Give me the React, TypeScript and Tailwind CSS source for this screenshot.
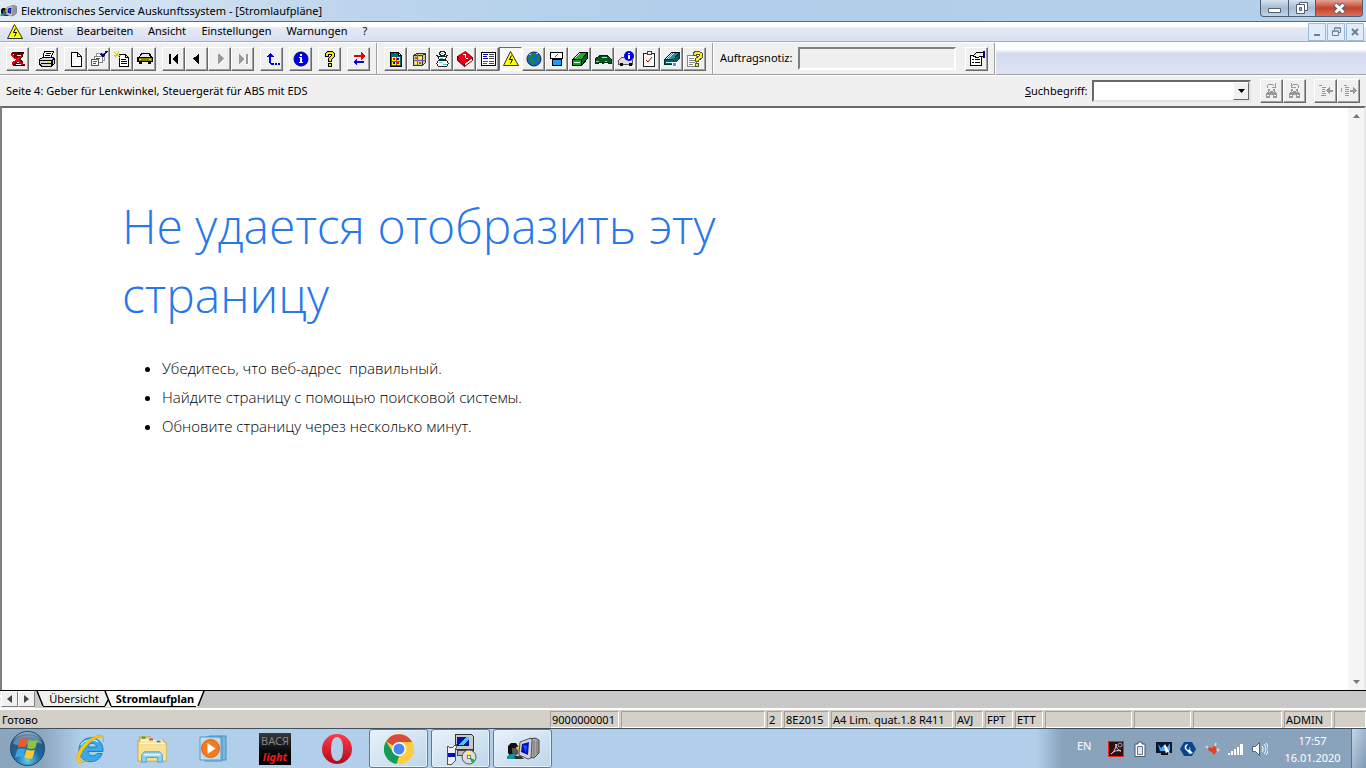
import { ReactNode } from "react";
import { clsx } from "clsx";

interface ToolButtonProps {
  label: string;
  pressed?: boolean;
  disabled?: boolean;
  children: ReactNode;
}

function Pic({ children }: { children: ReactNode }) {
  return (
    <svg viewBox="0 0 18 18" className="h-[18px] w-[18px] shrink-0" fill="none" shapeRendering="crispEdges" aria-hidden="true">
      {children}
    </svg>
  );
}

function ToolButton({ label, pressed, disabled, children }: ToolButtonProps) {
  return (
    <button
      type="button"
      title={label}
      aria-label={label}
      disabled={disabled}
      className={clsx(
        "flex h-6 w-[23px] shrink-0 items-center justify-center border",
        pressed
          ? "border-t-[#696969] border-l-[#696969] border-r-white border-b-white bg-[#f8f8f8]"
          : "border-t-white border-l-white border-r-[#696969] border-b-[#696969] bg-[#f0f0f0] shadow-[inset_-1px_-1px_0_#a0a0a0]"
      )}
    >
      {children}
    </button>
  );
}

function Divider() {
  return <div className="mx-[6px] h-full w-[2px] shrink-0 border-l border-[#a0a0a0] bg-white" />;
}

const page = "M4.5 2.5h6l4 4v10h-10z";

function MainTools() {
  return (
    <div className="flex items-center gap-[6px] pl-[6px]">
      <ToolButton label="Beenden">
        <Pic>
          <path d="M3 2h12v2h-1v2l-3 3 3 3v2h2v2H4v-2h1v-2l3-3-3-3V4H3z" fill="#600" />
          <path d="M8 5h4M8 12h3M7 14h6" stroke="#fff" />
          <path d="M2 4l12 11M3 14l11-9" stroke="#e00010" strokeWidth="2" />
          <path d="M8 2.500h7M6 15.500h9M13.500 4v3M5.500 5v3" stroke="#200" />
        </Pic>
      </ToolButton>
      <ToolButton label="Drucken">
        <Pic>
          <path d="M6.500 1.500h9l-3 7h-8z" fill="#fff" stroke="#000" />
          <path d="M8 3.500h5M7 5.500h5" stroke="#000" />
          <path d="M1.500 9.500l3-2h11l1 2v4l-3 2.500h-10l-2-2z" fill="#d8d8d8" stroke="#000" />
          <path d="M2 10.500h11.500v5M13.500 10.500l3-2M3 13.500h10M14.500 9v6" stroke="#000" />
          <path d="M9 12.500h2" stroke="#dd0" />
        </Pic>
      </ToolButton>
      <div className="flex">
        <ToolButton label="Neu">
          <Pic><path d={page} fill="#fff" stroke="#000" /><path d="M10.500 2.500v4h4" stroke="#000" /></Pic>
        </ToolButton>
        <ToolButton label="Auswahl">
          <Pic>
            <path d="M6.500 3.500h8v7h-8z" fill="#fff" stroke="#999" />
            <path d="M4.500 6.500h8v6h-8z" fill="#fff" stroke="#888" />
            <path d="M1.500 9.500h7v6h-7zM3 11.500h4M3 13.500h3M6 8.500h4" fill="#fff" stroke="#555" />
            <path d="M11 4l2 2 4-5" stroke="#000080" strokeWidth="2" />
          </Pic>
        </ToolButton>
        <ToolButton label="Neuer Auftrag">
          <Pic>
            <path d="M6.500 4.500h6l3 3v9h-9z" fill="#fff" stroke="#000" />
            <path d="M12.500 4.500v3h3M8 9.500h5M8 11.500h6M8 13.500h6" stroke="#000" />
            <path d="M1 2l6 6M6 1L2 8M1 5h7" stroke="#dbd000" />
          </Pic>
        </ToolButton>
        <ToolButton label="Fahrzeug">
          <Pic>
            <path d="M5 3h9l2 4h1v5h-2v2h-3v-2H6v2H3v-2H1V7h2z" fill="#000" />
            <path d="M6 4h7l1 3H4z" fill="#e8e8e8" />
            <path d="M3 8h13v3H3z" fill="#888000" />
            <path d="M3 9.500h2M13 9.500h2" stroke="#ff0" />
          </Pic>
        </ToolButton>
      </div>
      <div className="flex">
        <ToolButton label="Erste Seite"><Pic><path d="M4 4h2v10H4zM13 4v10h-1V13h-1V12h-1V11H9V10H8V8h1V7h1V6h1V5h1V4z" fill="#000" /></Pic></ToolButton>
        <ToolButton label="Vorherige Seite"><Pic><path d="M11 4v10h-1v-1H9v-1H8v-1H7v-1H6v-1H5V8h1V7h2V6h1V5h1V4z" fill="#000" /></Pic></ToolButton>
        <ToolButton label="Nächste Seite" disabled><Pic><path d="M8 15v-1h1v-1h1v-1h1v-1h1v-1h1V9h1v1h-1v1h-1v1h-1v1h-1v1H9v1z" fill="#fff" /><path d="M7 4v10h1v-1h1v-1h1v-1h1v-1h1v-1h1V8h-1V7h-1V6h-1V5H9V4z" fill="#999" /></Pic></ToolButton>
        <ToolButton label="Letzte Seite" disabled><Pic><path d="M5 4v10h1v-1h1v-1h1v-1h1v-1h1V8H9V7H8V6H7V5H6V4zM12 4h2v10h-2z" fill="#999" /><path d="M14.500 5v9.500M12 14.500h2" stroke="#fff" /></Pic></ToolButton>
      </div>
      <ToolButton label="Zurück">
        <Pic><path d="M3 7l4-4 4 4H8v6h3v2H8l-2-2V7zM12 13h2v2h-2zM15 13h2v2h-2z" fill="#0000e8" /></Pic>
      </ToolButton>
      <ToolButton label="Info">
        <Pic>
          <circle cx="9" cy="9" r="7" fill="#0000f0" stroke="#000080" shapeRendering="auto" />
          <path d="M8 4h2v2H8zM7 7h3v5h1v1H7v-1h1V8H7z" fill="#fff" />
        </Pic>
      </ToolButton>
      <ToolButton label="Hilfe">
        <Pic>
          <path d="M4.500 6.500v-3l2-2h5l2 2v3l-3 3v2h-3v-3l3-3v-1h-3v2z" fill="#f5e600" stroke="#000" />
          <path d="M7.500 13.500h3v3h-3z" fill="#f5e600" stroke="#000" />
        </Pic>
      </ToolButton>
      <ToolButton label="Wechseln">
        <Pic>
          <path d="M4 5h7V2l4 4-4 4V7H4z" fill="#e80000" />
          <path d="M14 11H7V9l-4 3 4 4v-3h7z" fill="#0000e8" />
        </Pic>
      </ToolButton>
    </div>
  );
}

function Warning() {
  return (
    <>
      <path d="M8.500 1.500l8 14h-15z" fill="#ff0" stroke="#333" shapeRendering="auto" />
      <path d="M9.500 5.500l-2 4h3l-2 4" stroke="#000" shapeRendering="auto" />
    </>
  );
}

function ServiceTools() {
  return (
    <div className="flex">
      <ToolButton label="Fahrzeugdaten">
        <Pic>
          <path d="M3.500 2.500h8l3 3v11h-11z" fill="#006d6d" stroke="#000" />
          <path d="M11.500 2.500v3h3z" fill="#fff" stroke="#000" />
          <path d="M5 7h8v8H5z" fill="#ff0" />
          <path d="M6 8h2v2H6zM10 12h2v2h-2z" fill="#e00" />
          <path d="M10 8h2v2h-2zM6 12h2v2H6z" fill="#00c" />
          <path d="M9 7v8M5 11h8" stroke="#c33" />
        </Pic>
      </ToolButton>
      <ToolButton label="Teile">
        <Pic>
          <path d="M3.500 5.500l3-2h9v9l-3 3h-9z" fill="#d0cc80" stroke="#334" />
          <path d="M4 5.500h8.500v10M12.500 5.500l3-2" stroke="#334" />
          <path d="M7.500 4v11M4 10.500h11" stroke="#6468c0" />
          <path d="M5 7h2v2H5zM9 12h2v2H9z" fill="#e33" />
          <path d="M9 7h3v2H9zM5 12h2v2H5z" fill="#ff0" />
        </Pic>
      </ToolButton>
      <ToolButton label="Wartung">
        <Pic>
          <path d="M7.500 1.500h4l1 2-1 2h-4l-1-2z" fill="#fff" stroke="#222" />
          <path d="M4.500 6.500h9l-1 3h-6z" fill="#fff" stroke="#222" />
          <path d="M5.500 10.500h8l2 3-2 3h-8l-2-3z" fill="#fff" stroke="#222" />
          <path d="M8 3.500h2M7 8.500h3M6 12.500h3M10 14.500h4" stroke="#4cc" />
          <path d="M3 5.500h2M13 5.500h2M8 10.500h3" stroke="#222" />
        </Pic>
      </ToolButton>
      <ToolButton label="Reparaturleitfaden">
        <Pic>
          <path d="M1.500 6.500l8-5 7 6-8 6z" fill="#f00018" stroke="#900" shapeRendering="auto" />
          <path d="M8.500 13.500l8-6v3l-8 6z" fill="#fff" stroke="#600" shapeRendering="auto" />
          <path d="M1.500 6.500l7 7v3l-7-6z" fill="#d00010" stroke="#600" shapeRendering="auto" />
          <path d="M7 4.500h2v3M10 8.500h2" stroke="#fff" />
        </Pic>
      </ToolButton>
      <ToolButton label="Fehlersuche">
        <Pic>
          <path d="M2.500 2.500h14v13h-14z" fill="#fff" stroke="#000" />
          <path d="M4 4.500h5M4 6.500h4M4 8.500h5" stroke="#00c" />
          <path d="M4 11.500h5M4 13.500h4" stroke="#090" />
          <path d="M10 4.500h5M10 6.500h5M10 8.500h5M10 11.500h5M10 13.500h5" stroke="#444" />
        </Pic>
      </ToolButton>
      <ToolButton label="Stromlaufpläne" pressed><Pic><Warning /></Pic></ToolButton>
      <ToolButton label="Internet">
        <Pic>
          <circle cx="9" cy="9" r="7" fill="#1664c8" stroke="#102060" shapeRendering="auto" />
          <path d="M5 3h5v2H8v2H6v2h3l1 3-2 3-2-1-1-4-2-1 1-4zM12 5h2l1 4-1 3-2-2z" fill="#128a3b" />
          <path d="M4 4h2v1H4zM11 3h2v1h-2z" fill="#9cf" />
        </Pic>
      </ToolButton>
      <ToolButton label="Karosserie">
        <Pic>
          <path d="M2.500 2.500h12v6h-12z" fill="#fff" stroke="#000" />
          <path d="M7 7l3-3" stroke="#555" />
          <path d="M4.500 9.500h9v6h-9z" fill="#29f" stroke="#000" />
        </Pic>
      </ToolButton>
      <ToolButton label="Handbuch">
        <Pic>
          <path d="M1.500 9.500l7-7h8l-6 7z" fill="#18b028" stroke="#000" />
          <path d="M1.500 9.500h9v6h-9z" fill="#10a020" stroke="#000" />
          <path d="M10.500 9.500l6-7v6l-6 7z" fill="#006b18" stroke="#000" />
          <path d="M4 8l5-5M3 12.500h6" stroke="#fff" />
        </Pic>
      </ToolButton>
      <ToolButton label="Fahrzeugsuche">
        <Pic>
          <path d="M1 9l3-2 3-2h5l3 2 2 2v4h-3v-1h-3l-1 1H8v-1H4v1H1z" fill="#005c1c" stroke="#002c08" />
          <path d="M7 8l1-1h4l1 1z" fill="#c0dfc0" />
          <path d="M2 11h3M11 11h2" stroke="#bbb" />
        </Pic>
      </ToolButton>
      <ToolButton label="Fahrzeuginfo">
        <Pic>
          <path d="M1.500 10.500l3-3h9l2 3v4h-14z" fill="#ddd" stroke="#555" />
          <path d="M3 13.500h2v2H3zM12 13.500h2v2h-2z" fill="#000" stroke="#000" />
          <circle cx="12" cy="6" r="5" fill="#0000f0" shapeRendering="auto" />
          <path d="M11 3h2v1h-2zM11 5h2v4h-2z" fill="#fff" />
        </Pic>
      </ToolButton>
      <ToolButton label="Checkliste">
        <Pic>
          <path d="M3.500 3.500h11v13h-11z" fill="#fff" stroke="#222" />
          <path d="M7 1.500h4v3H7z" fill="#eee" stroke="#444" />
          <path d="M6 10l2 2 4-5" stroke="#c00000" shapeRendering="auto" />
        </Pic>
      </ToolButton>
      <ToolButton label="Arbeitspositionen">
        <Pic>
          <path d="M1.500 9.500l7-7h8l-6 7z" fill="#1b9090" stroke="#000" />
          <path d="M1.500 9.500h9v5h-9zM10.500 9.500l6-7v6l-6 6z" fill="#006070" stroke="#033" />
          <path d="M3 9l6-6M5 9l6-6M3 12h7" stroke="#cff" />
          <path d="M9 12h4v4H9z" fill="#39f" stroke="#fff" />
        </Pic>
      </ToolButton>
      <ToolButton label="Hinweise">
        <Pic>
          <path d="M1.500 5.500h9v11h-9zM3 8.500h5M3 10.500h6M3 12.500h6M3 14.500h4" fill="#fff" stroke="#888" />
          <path d="M7.500 5.500v-3l2-1h4l3 2v4l-4 3v1h-3v-3l4-3v-1h-3v1z" fill="#ffee00" stroke="#554" />
          <path d="M9.500 13.500h3v3h-3z" fill="#ffee00" stroke="#554" />
        </Pic>
      </ToolButton>
    </div>
  );
}

function AppLogo({ className }: { className: string }) {
  return (
    <svg viewBox="0 0 34 24" className={className} aria-hidden="true">
      <path d="M2 9l3-3h5l2 3v7l-3 4H5l-3-4z" fill="#111" />
      <path d="M6 11h4l2 2v4l-3 2-3-3z" fill="#555" />
      <path d="M1 19l4-2h4l3 5H1z" fill="#0a9aa4" />
      <path d="M8 19h7l3 3H9z" fill="#333" />
      <path d="M12 9h5v10h-4z" fill="#f4f4f4" stroke="#555" strokeWidth=".5" />
      <path d="M10 10l5-1v2l-4 2zM13 6h4v4h-3z" fill="#eec900" />
      <path d="M23 2l6-1 4 2v13l-5 5-5-1z" fill="#a8a8a8" stroke="#222" strokeWidth=".8" />
      <path d="M14 5l11-4 1 2-1 18-3 1-9-4z" fill="#d4d4d4" stroke="#333" strokeWidth=".8" />
      <path d="M16 7l7-2-1 13-7-3z" fill="#0010b8" />
      <path d="M17 8l4 1-1 7z" fill="#2458ff" />
      <path d="M28 4v15M31 4v13" stroke="#666" strokeWidth=".8" />
    </svg>
  );
}

function TitleBar() {
  const button = "flex h-[17px] items-center justify-center border border-t-0 border-[#4d5f74]";
  return (
    <header className="flex h-[22px] items-start justify-between border-b border-[#5d6b7a] bg-linear-to-r from-[#c9dcef] via-[#b1cfea] to-[#b5d0ea]">
      <div className="flex h-[21px] items-center bg-linear-to-r from-[#dfeaf5] via-[#cfe0f1] to-transparent pr-6">
        <AppLogo className="mr-1 h-3 w-[17px]" />
        <h1 className="text-[11px] leading-4 text-black">Elektronisches Service Auskunftssystem - [Stromlaufpläne]</h1>
      </div>
      <div className="mr-[3px] flex">
        <button type="button" aria-label="Minimieren" className={clsx(button, "w-[29px] rounded-bl-[4px] bg-linear-to-b from-[#d6e2ef] via-[#a5bbd2] to-[#c1d5e9]")}>
          <svg viewBox="0 0 13 5" className="mt-1 h-[5px] w-[13px]" aria-hidden="true"><path d="M.5.5h12v4H.5z" fill="#fff" stroke="#555f70" /></svg>
        </button>
        <button type="button" aria-label="Verkleinern" className={clsx(button, "w-[27px] border-l-0 bg-linear-to-b from-[#d6e2ef] via-[#a5bbd2] to-[#c1d5e9]")}>
          <svg viewBox="0 0 12 12" className="h-3 w-3" aria-hidden="true">
            <path d="M3.500.5h8v8h-8z" fill="#fff" stroke="#555f70" />
            <path d="M.5 2.500h8v9h-8z" fill="#fff" stroke="#555f70" />
            <path d="M3.500 5.500h2v3h-2z" fill="#9fb4c9" stroke="#555f70" />
          </svg>
        </button>
        <button type="button" aria-label="Schließen" className={clsx(button, "w-[47px] rounded-br-[4px] border-l-0 bg-linear-to-b from-[#e2a295] via-[#c4412c] to-[#d9705a]")}>
          <svg viewBox="0 0 13 11" className="h-[11px] w-[13px]" aria-hidden="true">
            <path d="M2 1l9 9M11 1l-9 9" stroke="#555f70" strokeWidth="5" />
            <path d="M2.500 1.500l8 8M10.500 1.500l-8 8" stroke="#fff" strokeWidth="3" />
          </svg>
        </button>
      </div>
    </header>
  );
}

function MenuBar() {
  const childButton = "flex h-[18px] w-[18px] items-center justify-center border border-[#9db9d6] bg-[#dfecfa]";
  return (
    <nav className="flex h-5 items-center justify-between border-b border-[#a9a9b8] bg-linear-to-b from-white from-25% via-[#e3eaf4] via-30% to-[#dbe0f2] text-[11px]">
      <div className="flex items-center">
        <span className="ml-[6px] flex w-[17px]"><Pic><Warning /></Pic></span>
        <button type="button" className="w-[47px]">Dienst</button>
        <button type="button" className="w-[70px]">Bearbeiten</button>
        <button type="button" className="w-[54px]">Ansicht</button>
        <button type="button" className="w-[85px]">Einstellungen</button>
        <button type="button" className="w-[76px]">Warnungen</button>
        <button type="button" className="w-[20px]">?</button>
      </div>
      <div className="mr-[2px] flex gap-px">
        <button type="button" aria-label="Fenster minimieren" className={childButton}>
          <svg viewBox="0 0 8 8" className="h-2 w-2" aria-hidden="true"><path d="M1 6h6v2H1z" fill="#6d7f92" /></svg>
        </button>
        <button type="button" aria-label="Fenster verkleinern" className={childButton}>
          <svg viewBox="0 0 9 9" className="h-[9px] w-[9px]" aria-hidden="true"><path d="M2.500 3V1h6v4.500H7M.5 4h6v4.500h-6zM0 4h7M2 1h7" fill="none" stroke="#6d7f92" /></svg>
        </button>
        <button type="button" aria-label="Fenster schließen" className={childButton}>
          <svg viewBox="0 0 8 8" className="h-2 w-2" aria-hidden="true"><path d="M1 1l6 6M7 1L1 7" stroke="#6d7f92" strokeWidth="2" /></svg>
        </button>
      </div>
    </nav>
  );
}

function Toolbar() {
  return (
    <div className="flex h-[33px] items-center border-t border-b border-t-white border-b-[#a0a0a0] bg-linear-to-b from-white from-20% via-[#d3d9ee] via-35% to-[#e0e5f6]">
      <div className="flex h-full items-center bg-[#f0f0f0]">
        <MainTools />
        <Divider />
        <ServiceTools />
        <Divider />
        <label htmlFor="note" className="w-[78px] text-[11px]">Auftragsnotiz:</label>
        <input
          id="note"
          readOnly
          className="mr-[9px] h-[23px] w-[158px] border-2 border-t-[#808080] border-l-[#808080] border-r-white border-b-white bg-[#f0f0f0] px-1 text-[11px] outline-none"
        />
        <ToolButton label="Eigenschaften">
          <Pic>
            <path d="M2.500 5.500h11v10h-11z" fill="#fff" stroke="#000" />
            <path d="M4 9.500h2M4 12.500h2M7 9.500h5M7 12.500h5" stroke="#000" />
            <path d="M5 6l4-4h6v4h-3l-2 2z" fill="#eee" stroke="#000" />
            <path d="M15 1h2v7h-2z" fill="#000090" />
          </Pic>
        </ToolButton>
        <div className="ml-[6px] h-8 w-[2px] border-l border-[#a0a0a0] bg-white" />
      </div>
    </div>
  );
}

function Binoculars({ flip }: { flip?: boolean }) {
  return (
    <Pic>
      <path d="M5 7h2v2h3V7h2v2l2 3v4h-4v-3H7v3H3v-4l2-3z" fill="#999" />
      <path d="M4 13.500h2M11 13.500h2M6 9.500h1M10 9.500h1" stroke="#fff" />
      <path d={flip ? "M12.500 6V3.500l-1-1h-4l-2 2M5.500 1v4h4" : "M4.500 6V3.500l1-1h4l2 2M12.500 1v4h-4"} stroke="#999" />
    </Pic>
  );
}

function SearchRow() {
  return (
    <div className="flex h-[31px] items-center justify-between border-t border-t-white bg-[#f0f0f0] pr-[6px] pl-[6px] text-[11px]">
      <p>Seite 4: Geber für Lenkwinkel, Steuergerät für ABS mit EDS</p>
      <div className="flex items-center">
        <label htmlFor="search" className="w-[67px]"><u>S</u>uchbegriff:</label>
        <div className="mr-[9px] flex h-[22px] w-[159px] border-2 border-t-[#696969] border-l-[#696969] border-r-[#e3e3e3] border-b-[#e3e3e3] bg-white">
          <input id="search" className="min-w-0 flex-1 bg-white px-1 outline-none" />
          <button type="button" aria-label="Suchbegriffe öffnen" className="flex w-4 items-center justify-center border border-t-white border-l-white border-r-[#696969] border-b-[#696969] bg-[#f0f0f0]">
            <svg viewBox="0 0 7 4" className="h-1 w-[7px]" aria-hidden="true"><path d="M0 0h7L3.500 4z" /></svg>
          </button>
        </div>
        <ToolButton label="Weitersuchen" disabled><Binoculars /></ToolButton>
        <ToolButton label="Rückwärts suchen" disabled><Binoculars flip /></ToolButton>
        <div className="w-2" />
        <ToolButton label="Vorherige Fundstelle" disabled>
          <Pic>
            <path d="M2 3.500h3M5 5.500h4M5 7.500h3M5 9.500h3M5 11.500h4M4 13.500h5" stroke="#999" />
            <path d="M9 8.500l4-4v3h3v2h-3v3z" fill="#999" />
          </Pic>
        </ToolButton>
        <ToolButton label="Nächste Fundstelle" disabled>
          <Pic>
            <path d="M1.500 6v4M4 3.500h3M5 5.500h4M5 7.500h4M5 9.500h4M5 11.500h4M5 13.500h4" stroke="#999" />
            <path d="M17 8.500l-4-4v3h-3v2h3v3z" fill="#999" />
          </Pic>
        </ToolButton>
      </div>
    </div>
  );
}

function ErrorPage() {
  return (
    <main className="flex min-h-0 flex-1 border-t-2 border-r-2 border-l-2 border-t-[#696969] border-r-[#e8e8e8] border-l-[#808080] bg-white">
      <article className="flex-1 pt-[83px] pl-[120px] font-['Open_Sans','Noto_Sans',sans-serif] font-light">
        <h2 className="max-w-[640px] text-[48px] leading-[69px] text-[#2778ec]">Не удается отобразить эту страницу</h2>
        <ul className="mt-[25px] list-disc pl-[40px] text-[15px] leading-[29px] text-black">
          <li>Убедитесь, что веб-адрес&nbsp; правильный.</li>
          <li>Найдите страницу с помощью поисковой системы.</li>
          <li>Обновите страницу через несколько минут.</li>
        </ul>
      </article>
      <div className="flex w-4 flex-col items-center justify-between bg-[#f5f5f5] py-[6px]">
        <svg viewBox="0 0 7 4" className="h-1 w-[7px]" aria-hidden="true"><path d="M0 4h7L3.500 0z" fill="#777" /></svg>
        <svg viewBox="0 0 7 4" className="h-1 w-[7px]" aria-hidden="true"><path d="M0 0h7L3.500 4z" fill="#777" /></svg>
      </div>
    </main>
  );
}

function SheetTabs() {
  const arrow = "flex h-4 w-[17px] items-center justify-center border border-t-white border-l-white border-r-[#808080] border-b-[#808080] bg-[#f0f0f0]";
  return (
    <div className="flex h-[18px] border-t border-black bg-[#c8c8c8] text-[11px] leading-4">
      <div className="flex bg-[#f0f0f0] pl-px">
        <button type="button" aria-label="Zurückblättern" className={arrow}>
          <svg viewBox="0 0 5 8" className="h-2 w-[5px]" aria-hidden="true"><path d="M5 0v8L0 4z" fill="#444" /></svg>
        </button>
        <button type="button" aria-label="Vorblättern" className={arrow}>
          <svg viewBox="0 0 5 8" className="h-2 w-[5px]" aria-hidden="true"><path d="M0 0v8l5-4z" fill="#444" /></svg>
        </button>
      </div>
      <svg viewBox="0 0 11 16" className="h-4 w-[11px]" aria-hidden="true"><path d="M1 0h10v16H7z" fill="#f0f0f0" /><path d="M2 0l6 15" stroke="#000" strokeWidth="1.500" fill="none" /><path d="M8 15.500h3" stroke="#000" /></svg>
      <button type="button" className="h-4 w-[56px] border-b border-black bg-[#f0f0f0] pb-px">Übersicht</button>
      <svg viewBox="0 0 12 16" className="h-4 w-3" aria-hidden="true"><path d="M0 0h12v16H0z" fill="#f0f0f0" /><path d="M3 0h9v16H8z" fill="#fff" /><path d="M3 0l6 15M6 9l-3 6" stroke="#000" strokeWidth="1.500" fill="none" /><path d="M0 15.500h3M9 15.500h3" stroke="#000" /></svg>
      <button type="button" className="h-4 w-[82px] border-b border-black bg-white pb-px font-bold">Stromlaufplan</button>
      <svg viewBox="0 0 10 16" className="h-4 w-[10px]" aria-hidden="true"><path d="M0 0h8L2 16H0z" fill="#fff" /><path d="M8 0L2 15" stroke="#000" strokeWidth="1.500" /></svg>
    </div>
  );
}

const statusCells = [
  { text: "9000000001", width: "w-[69px]" },
  { text: "", width: "w-[144px]" },
  { text: "2", width: "w-[15px]" },
  { text: "8E2015", width: "w-[45px]" },
  { text: "A4 Lim. quat.1.8 R411", width: "w-[122px]" },
  { text: "AVJ", width: "w-7" },
  { text: "FPT", width: "w-7" },
  { text: "ETT", width: "w-7" },
  { text: "", width: "w-[87px]" },
  { text: "", width: "w-[57px]" },
  { text: "", width: "w-[89px]" },
  { text: "ADMIN", width: "w-12" },
  { text: "", width: "w-8" }
];

function StatusBar() {
  return (
    <div className="flex h-5 items-end border-t-2 border-white bg-[#d4d0c8] text-[11px] leading-4">
      <p className="flex-1 pl-[2px]">Готово</p>
      <div className="flex gap-[2px]">
        {statusCells.map((cell, index) => (
          <span
            key={index}
            className={clsx("h-[17px] shrink-0 border border-t-[#a0a0a0] border-l-[#a0a0a0] border-r-white border-b-white pl-px whitespace-nowrap", cell.width)}
          >
            {cell.text}
          </span>
        ))}
      </div>
    </div>
  );
}

function Launchers() {
  return (
    <div className="flex items-center">
      <button type="button" aria-label="Start" className="ml-[9px] flex w-[37px] justify-center">
        <svg viewBox="0 0 38 38" className="h-[37px] w-[37px]" aria-hidden="true">
          <defs>
            <radialGradient id="orb" cx="50%" cy="85%" r="85%">
              <stop offset="0" stopColor="#58d0f0" />
              <stop offset=".45" stopColor="#1a66a0" />
              <stop offset=".8" stopColor="#295681" />
              <stop offset="1" stopColor="#a8c8de" />
            </radialGradient>
          </defs>
          <circle cx="19" cy="19" r="17.500" fill="url(#orb)" stroke="#1d496e" />
          <path d="M4 14C8 4 29 2 34 14c-8-3-19 5-30 0z" fill="#fff" opacity=".3" />
          <path d="M11 10c3-2 5-2 8-.5l-2 8.500c-3-1.500-5-1-8 .5z" fill="#ef5a24" />
          <path d="M20.500 10c3 1.500 5.500 1.500 9 0l-2.500 8.500c-3 1.500-5.500 1-8.500 0z" fill="#8cc63e" />
          <path d="M8.500 20c3-1.500 5-1.500 8-.3l-2.300 8.500c-3-1.500-5-1-8 .3z" fill="#3ea5e4" />
          <path d="M18 20c3 1.500 5.500 1.500 8.500.2l-2.300 8.500c-3 1.500-5.500 1-8.500-.3z" fill="#fdc82f" />
        </svg>
      </button>
      <button type="button" aria-label="Internet Explorer" className="flex w-[90px] justify-center">
        <svg viewBox="0 0 32 32" className="h-8 w-8" aria-hidden="true">
          <path d="M27 20.500H22c-1.500 3-8.500 3.500-9-2h15c1-18-24-18-24-1.500 0 15 20 15 23 3.500zM13 14c.5-5 8-5 8.500 0z" fill="#39a9e8" stroke="#1780c8" fillRule="evenodd" />
          <path d="M6 12C9 7 18 5 23 9" fill="none" stroke="#b9ecff" strokeWidth="1.500" />
          <path d="M28 9c3-8-4-9-13-3C5 12-1 25 3 29c2 2 7 0 10-2-5 2-8 2-8-1C5 18 17 5 25 4c4 0 4 2 3 5z" fill="#ffc913" stroke="#d79b08" strokeWidth=".5" />
        </svg>
      </button>
      <button type="button" aria-label="Explorer" className="flex w-8 justify-center">
        <svg viewBox="0 0 34 32" className="h-8 w-[34px]" aria-hidden="true">
          <path d="M2 7h2V3h11l2 3h12l1 3h2v20H2z" fill="#f1d77e" stroke="#c6a443" />
          <path d="M5 7h23M4 10h27" stroke="#fff6cb" strokeWidth="2" />
          <path d="M6 3h4v2H6z" fill="#22a445" /><path d="M14 5h4v2h-4z" fill="#d84735" /><path d="M22 7h4v2h-4z" fill="#2e7de0" />
          <path d="M3 12h29v16H3z" fill="#f8e298" />
          <path d="M6 30V22l3-3h16l3 3v8h-5v-5H11v5z" fill="#8ed0ef" stroke="#4e9fc9" />
          <path d="M8 22h18" stroke="#dcf5ff" strokeWidth="2" />
        </svg>
      </button>
      <button type="button" aria-label="Media Player" className="flex w-[91px] justify-center">
        <svg viewBox="0 0 30 28" className="h-7 w-[30px]" aria-hidden="true">
          <path d="M10 1h17v24H10z" fill="#7ab8dc" stroke="#4c90bb" />
          <path d="M6 2h17v24H6z" fill="#a5d4ee" stroke="#4c90bb" />
          <path d="M1 2h19l2 2v21H1z" fill="#b9def3" stroke="#5c9cc4" />
          <circle cx="11.500" cy="13.500" r="9" fill="#f57a1c" stroke="#e26208" />
          <path d="M8.500 8v11l8-5.500z" fill="#fff" />
        </svg>
      </button>
      <button type="button" className="flex h-8 w-8 flex-col items-center justify-center bg-linear-to-b from-[#3a3a3a] to-black">
        <span className="text-[11px] leading-4 text-[#858585]">ВАСЯ</span>
        <span className="text-[11px] leading-4 font-bold text-[#f01a20] italic">light</span>
      </button>
      <button type="button" aria-label="Opera" className="flex w-[91px] justify-center">
        <svg viewBox="0 0 30 30" className="h-[30px] w-[30px]" aria-hidden="true">
          <defs><linearGradient id="opera" x2="0" y2="1"><stop stopColor="#ff3a48" /><stop offset="1" stopColor="#b00b1c" /></linearGradient></defs>
          <path d="M15 0a15 15 0 100 30 15 15 0 000-30zm0 3c4 0 6 5 6 12s-2 12-6 12-6-5-6-12 2-12 6-12z" fill="url(#opera)" fillRule="evenodd" />
        </svg>
      </button>
    </div>
  );
}

function TaskButtons() {
  const task = "flex h-[39px] w-[59px] items-center justify-center rounded-[3px] border border-[#62798f] bg-linear-to-br from-[#e9f2fa] to-[#bdd6ec] shadow-[inset_0_0_0_1px_#e6f2fb]";
  return (
    <div className="flex gap-[3px]">
      <button type="button" aria-label="Chrome" className={task}>
        <svg viewBox="0 0 30 30" className="h-[30px] w-[30px]" aria-hidden="true">
          <circle cx="15" cy="15" r="15" fill="#fccd3d" />
          <path d="M15 15L2 7.500A15 15 0 0128 8H15z" fill="#db4a3f" />
          <path d="M2 7.500L9 18l6 4-2.500 8A15 15 0 012 7.500z" fill="#139b5c" />
          <path d="M21.500 18L14 30a15 15 0 0014-22H15z" fill="#fccd3d" />
          <circle cx="15" cy="15" r="7" fill="#fff" />
          <circle cx="15" cy="15" r="5.500" fill="#4886f2" />
        </svg>
      </button>
      <button type="button" aria-label="Installation" className={task}>
        <svg viewBox="0 0 32 32" className="h-8 w-8" shapeRendering="crispEdges" aria-hidden="true">
          <path d="M10 1h16l2 2v13H10z" fill="#c8c8c8" stroke="#333" />
          <path d="M12 4h12v9H12z" fill="#0010a8" /><path d="M13 12l8-8h3v2l-6 6z" fill="#33d5e0" />
          <path d="M12 17h16v5H12z" fill="#bbb" stroke="#444" />
          <path d="M2 13l4 2 5-3v3l-1 3v10l-3 3H2z" fill="#eee" stroke="#555" />
          <path d="M3 20h7v4H3z" fill="#0010c0" />
          <circle cx="24" cy="24" r="7" fill="#ddd" stroke="#555" shapeRendering="auto" />
          <path d="M24 24l-3-6h4z" fill="#ff0" /><path d="M24 24l6 3-3 3z" fill="#0cbc56" />
          <circle cx="24" cy="24" r="2" fill="#fff" stroke="#777" />
        </svg>
      </button>
      <button type="button" aria-label="Elektronisches Service Auskunftssystem" className={task}>
        <AppLogo className="h-6 w-[34px]" />
      </button>
    </div>
  );
}

function Tray() {
  return (
    <div className="flex h-full items-center bg-linear-to-r from-transparent to-[#8aa3bd] to-8% pl-[41px] text-[11px] text-white">
      <button type="button" className="mb-1 w-[31px] text-left">EN</button>
      <div className="flex items-center gap-2">
        <svg viewBox="0 0 16 16" className="h-4 w-4" aria-hidden="true"><path d="M.5.5h15v15H.5z" fill="#291014" stroke="#f02018" /><path d="M3 13c4-3 5-7 5-10 0 4 2 6 5 7-4-1-7 0-10 3z" fill="none" stroke="#e8dada" /><circle cx="12" cy="4" r="2" fill="none" stroke="#aaa" /></svg>
        <svg viewBox="0 0 16 16" className="h-4 w-4" aria-hidden="true"><path d="M6 1h4v2h3v12.500H3V3h3z" fill="#fff" stroke="#4a5868" /><path d="M5.500 5.500h5v8h-5z" fill="#dfe6ee" stroke="#66788c" /></svg>
        <svg viewBox="0 0 16 16" className="h-4 w-4" aria-hidden="true"><path d="M0 1h16v11H0z" fill="#081830" /><path d="M2 3l3 4 3-3 2 4 4-6v8H4z" fill="#49a4f5" /><path d="M9 3l5 9-3-1-1 2-2-8z" fill="#fff" /><path d="M5 12h7v2H5z" fill="#111" /></svg>
        <svg viewBox="0 0 16 16" className="h-4 w-4" aria-hidden="true"><path d="M4 1h8l4 7-4 7H4L0 8z" fill="#08458e" /><path d="M8 3c-3 0-4 3-3 5l2 2 3 3 3-1-3-3c1-2 0-3-1-3l1 2-2 1-2-2z" fill="#fff" /></svg>
        <svg viewBox="0 0 16 16" className="h-4 w-4" aria-hidden="true"><path d="M5 6l3 1 3-3 1 4 1 2-3 4-2-3-3-1-1-2z" fill="#e8401d" /><path d="M11 5l1-3M4 7L2 5" stroke="#dce4ee" strokeWidth="1.500" /><circle cx="14" cy="9" r="1.500" fill="#d8d8d8" /></svg>
        <svg viewBox="0 0 16 16" className="h-4 w-4" shapeRendering="crispEdges" aria-hidden="true"><path d="M0 12h2v2H0zM3 10h2v4H3zM6 8h2v6H6zM9 6h2v8H9zM12 3h3v11h-3z" fill="#fff" /></svg>
        <svg viewBox="0 0 16 16" className="h-4 w-4" aria-hidden="true"><path d="M.5 5.500h3l4-4v13l-4-4h-3z" fill="#fff" stroke="#506070" /><path d="M10 5c1.500 2 1.500 4 0 6M12 3c2.500 3 2.500 7 0 10M14 2c3 4 3 8 0 12" fill="none" stroke="#fff" /></svg>
      </div>
      <time className="ml-[14px] w-[61px] text-center leading-[17px]">17:57<br />16.01.2020</time>
      <button type="button" aria-label="Desktop anzeigen" className="ml-2 h-full w-[15px] border-l border-[#5d748b] bg-linear-to-br from-[#c4d6e8] to-[#7f99b3]" />
    </div>
  );
}

export default function App() {
  return (
    <div className="flex h-screen flex-col overflow-hidden bg-[#f0f0f0] font-['Noto_Sans',sans-serif] text-black">
      <TitleBar />
      <MenuBar />
      <Toolbar />
      <SearchRow />
      <ErrorPage />
      <SheetTabs />
      <StatusBar />
      <footer className="flex h-10 shrink-0 items-center justify-between border-t border-[#3f4f60] bg-linear-to-r from-[#8ca5be] from-3% to-[#b1cfea] to-6%">
        <div className="flex items-center">
          <Launchers />
          <div className="-ml-[13px]"><TaskButtons /></div>
        </div>
        <Tray />
      </footer>
    </div>
  );
}
